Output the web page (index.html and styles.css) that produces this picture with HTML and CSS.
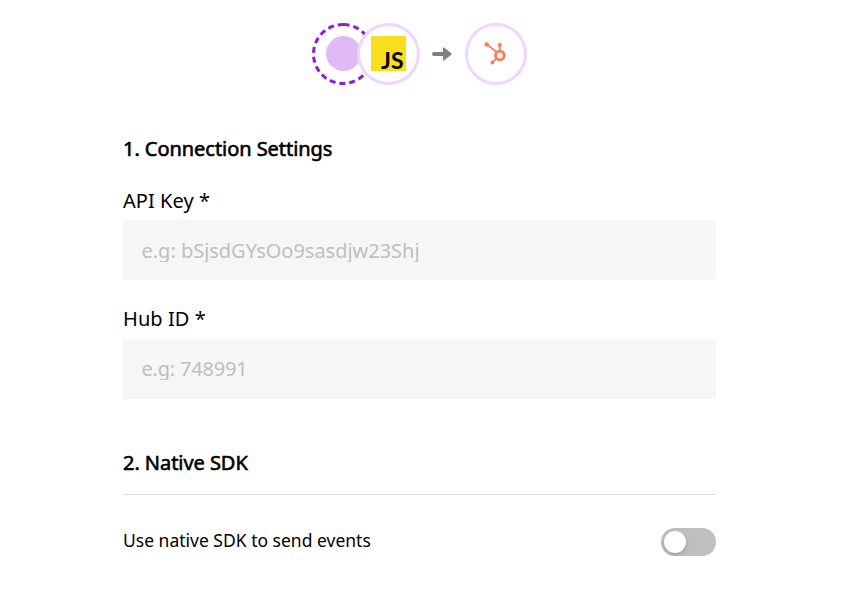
FILE: index.html
```html
<!DOCTYPE html>
<html lang="en">
<head>
<meta charset="utf-8">
<title>Connection Settings</title>
<link rel="stylesheet" href="styles.css">
</head>
<body>
<header class="flow">
  <svg class="source" width="62" height="62" viewBox="0 0 62 62" aria-hidden="true">
    <circle class="dashes" cx="31" cy="31" r="29.5" transform="rotate(-89 31 31)"/>
    <circle class="dot" cx="31.5" cy="30.5" r="17.5"/>
  </svg>
  <div class="node node-js"><div class="js">JS</div></div>
  <svg class="arrow" width="20" height="14" viewBox="0 0 20 14" aria-hidden="true">
    <path d="M2 5H11V1Q11 0 12 .5L19.3 6.2Q20 7 19.3 7.8L12 13.5Q11 14 11 13V9H2Q0 9 0 7Q0 5 2 5Z"/>
  </svg>
  <div class="node">
    <svg class="hub" width="22" height="23" viewBox="0 0 22 23" aria-hidden="true">
      <path d="M2.7 2.4L11.8 9.3M15.8 3V9M12.4 16.6L8.4 20.4"/>
      <circle class="ring" cx="15.8" cy="13.4" r="4.35"/>
      <circle class="end" cx="2.7" cy="2.4" r="2.2"/>
      <circle class="end" cx="15.8" cy="2.9" r="2"/>
      <circle class="end" cx="8.4" cy="20.5" r="1.9"/>
    </svg>
  </div>
</header>
<main class="form">
  <h2 class="title">1. Connection Settings</h2>
  <div class="field">
    <div class="label">API Key *</div>
    <div class="box"><div class="hint">e.g: bSjsdGYsOo9sasdjw23Shj</div></div>
  </div>
  <div class="field">
    <div class="label">Hub ID *</div>
    <div class="box box-id"><div class="hint">e.g: 748991</div></div>
  </div>
  <h2 class="title title-sdk">2. Native SDK</h2>
  <div class="option">
    <span class="option-text">Use native SDK to send events</span>
    <div class="switch"><div class="knob"></div></div>
  </div>
</main>
</body>
</html>
```
FILE: styles.css
```css
* { box-sizing: border-box; }
body {
  margin: 0;
  background: #fff;
  color: #000;
  font-family: "Noto Sans", sans-serif;
}
.flow {
  display: flex;
  align-items: center;
  height: 62px;
  margin: 23px 0 0 312px;
}
.source { flex: none; }
.dashes { fill: none; stroke: #8f1bdb; stroke-width: 3; stroke-dasharray: 6 3.96; }
.dot { fill: #dfbaf5; }
.node {
  display: flex;
  align-items: center;
  justify-content: center;
  flex: none;
  width: 62px;
  height: 62px;
  border: 3px solid #eed6ff;
  border-radius: 50%;
  background: #fff;
}
.node-js { width: 63px; margin-left: -17px; padding-right: 1px; z-index: 1; }
.js {
  width: 35px;
  height: 35px;
  margin-bottom: 1px;
  padding: 12px 1.5px 0 0;
  background: #f7df1e;
  font: 700 23px/24px Lato, sans-serif;
  text-align: right;
  letter-spacing: .3px;
}
.arrow { margin: 0 13px 0 12px; fill: #808080; }
.hub { fill: none; stroke: #ff7a59; stroke-width: 1.7; margin: 0 1px 1px -2px; }
.ring { stroke-width: 2.8; }
.end { fill: #ff7a59; stroke: none; }
.form { width: 593px; margin: 50px 0 0 123px; }
.title {
  margin: 0;
  font-size: 20px;
  line-height: 28px;
  font-weight: 400;
  letter-spacing: -.05px;
  -webkit-text-stroke: .6px #000;
}
.field { padding-top: 24px; }
.field + .field { padding-top: 25px; }
.label { height: 34px; font-size: 20px; line-height: 28px; letter-spacing: .06px; }
.title + .field .label { height: 33px; }
.box {
  height: 60px;
  padding: 18px 18.5px;
  border-radius: 2px;
  background: #f6f6f6;
}
.hint { height: 24px; overflow: hidden; color: #bfbfbf; font-size: 20px; line-height: 25px; letter-spacing: -.02px; }
.box-id { padding-top: 17px; }
.box-id .hint { letter-spacing: -.2px; }
.title-sdk { height: 46px; margin-top: 50px; border-bottom: 1px solid #dedede; }
.option { display: flex; align-items: center; justify-content: space-between; margin-top: 33px; height: 28px; }
.option-text { font-size: 17.5px; line-height: 25px; margin-bottom: 3px; }
.switch { width: 55px; height: 28px; padding: 3px; border-radius: 14px; background: #bfbfbf; }
.knob { width: 22px; height: 22px; border-radius: 50%; background: #fff; box-shadow: 0 2px 4px rgba(0,35,11,.2); }
```
